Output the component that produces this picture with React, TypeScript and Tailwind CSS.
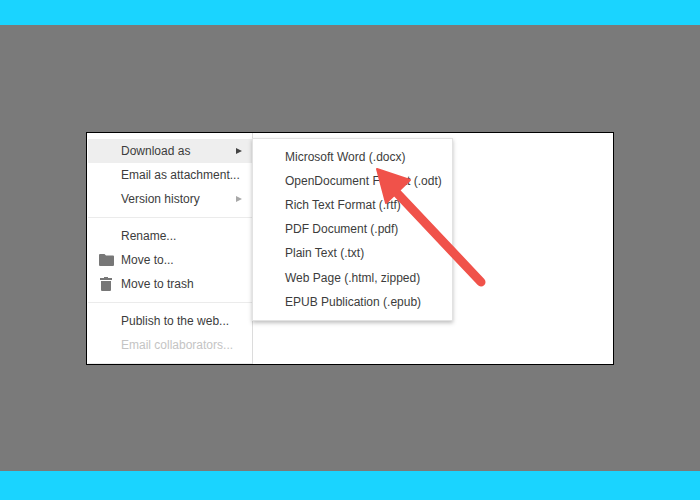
const mainItems = [
  { label: "Download as", arrow: "dark", active: true },
  { label: "Email as attachment..." },
  { label: "Version history", arrow: "light" },
];

const fileItems = [
  { label: "Rename..." },
  { label: "Move to...", icon: "folder" },
  { label: "Move to trash", icon: "trash" },
];

const shareItems = [
  { label: "Publish to the web..." },
  { label: "Email collaborators...", disabled: true },
];

const downloadFormats = [
  "Microsoft Word (.docx)",
  "OpenDocument Format (.odt)",
  "Rich Text Format (.rtf)",
  "PDF Document (.pdf)",
  "Plain Text (.txt)",
  "Web Page (.html, zipped)",
  "EPUB Publication (.epub)",
];

type Item = {
  label: string;
  arrow?: string;
  active?: boolean;
  icon?: string;
  disabled?: boolean;
};

const MenuRow = ({ item }: { item: Item }) => {
  return (
    <div className={`flex h-[24px] items-center ${item.active ? "bg-[#eeeeee]" : ""}`}>
      <div className="flex w-[33px] shrink-0 justify-center pl-[3px]">
        {item.icon === "folder" && (
          <svg width="15" height="12" viewBox="0 0 15 12">
            <path d="M0 1 Q0 0 1 0 H5.5 L7 1.6 H14 Q15 1.6 15 2.6 V11 Q15 12 14 12 H1 Q0 12 0 11 Z" fill="#777777" />
          </svg>
        )}
        {item.icon === "trash" && (
          <svg width="12" height="14" viewBox="0 0 12 14">
            <path d="M4 0 H8 V1 H12 V3 H0 V1 H4 Z M1 4 H11 V13 Q11 14 10 14 H2 Q1 14 1 13 Z" fill="#777777" />
          </svg>
        )}
      </div>
      <span className={`flex-1 whitespace-nowrap ${item.disabled ? "text-[#c4c4c4]" : "text-[#3c3c3c]"}`}>
        {item.label}
      </span>
      {item.arrow && (
        <svg className="mr-[10px]" width="6" height="6" viewBox="0 0 6 6">
          <path d="M0 0 L6 3 L0 6 Z" fill={item.arrow === "dark" ? "#444444" : "#a8a8a8"} />
        </svg>
      )}
    </div>
  );
};

const Divider = () => <div className="my-[6px] h-px bg-[#ebebeb]" />;

const App = () => {
  return (
    <div className="flex h-[500px] w-[700px] flex-col bg-[#1ad4ff] font-['Liberation_Sans',Arial,sans-serif] text-[12px]">
      <div className="h-[25px] shrink-0" />
      <div className="flex h-[446px] shrink-0 items-center justify-center bg-[#7a7a7a]">
        <div className="relative h-[233px] w-[528px] border border-black bg-white">
          {/* left menu */}
          <div className="ml-px h-full w-[165px] overflow-hidden border-r border-[#dcdcdc] pt-[6px]">
            {mainItems.map((item) => (
              <MenuRow key={item.label} item={item} />
            ))}
            <Divider />
            {fileItems.map((item) => (
              <MenuRow key={item.label} item={item} />
            ))}
            <Divider />
            {shareItems.map((item) => (
              <MenuRow key={item.label} item={item} />
            ))}
            <Divider />
          </div>

          {/* download as submenu */}
          <div className="absolute left-[165px] top-[5px] w-[201px] border border-[#e2e2e2] bg-white py-[6px] shadow-[0_2px_4px_rgba(0,0,0,0.25)]">
            {downloadFormats.map((label) => (
              <div key={label} className="flex h-[24.2px] items-center whitespace-nowrap pl-[32px] text-[#3c3c3c]">
                {label}
              </div>
            ))}
          </div>

          {/* red arrow */}
          <svg className="absolute left-[270px] top-[20px]" width="140" height="150" viewBox="0 0 140 150">
            <path d="M124 129 L40 40" stroke="#f0524a" strokeWidth="9" strokeLinecap="round" />
            <path d="M20 16 L53 27 L29 50 Z" fill="#f0524a" stroke="#f0524a" strokeWidth="2" strokeLinejoin="round" />
          </svg>
        </div>
      </div>
      <div className="flex-1" />
    </div>
  );
};

export default App;
